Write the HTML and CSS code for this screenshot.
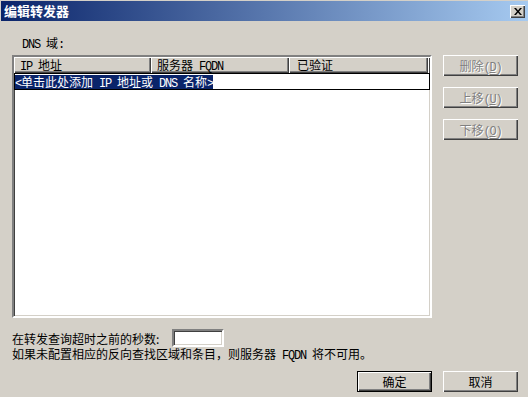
FILE: index.html
```html
<!DOCTYPE html>
<html lang="zh-CN">
<head>
<meta charset="UTF-8">
<title>编辑转发器</title>
<link rel="stylesheet" href="styles.css">
</head>
<body>
    <!-- Title bar -->
    <div class="titlebar">
        <span class="title">编辑转发器</span>
        <button class="close-btn">
            <svg width="8" height="7" viewBox="0 0 8 7">
                <path d="M0 0h2l2 2.5 2-2.5h2l-3 3.5 3 3.5h-2l-2-2.5-2 2.5h-2l3-3.5z" fill="#000"/>
            </svg>
        </button>
    </div>

    <div class="dialog">
        <div class="field-label"><span class="en">DNS </span>域<span class="en">:</span></div>

        <div class="main">
            <!-- Forwarder list -->
            <div class="listview">
                <div class="list-header">
                    <div class="col col-ip"><span class="en">IP </span>地址</div>
                    <div class="col col-fqdn">服务器<span class="en"> FQDN</span></div>
                    <div class="col col-ok">已验证</div>
                    <div class="col col-rest"></div>
                </div>
                <div class="list-row">
                    <span class="selected"><span class="en">&lt;</span>单击此处添加<span class="en"> IP </span>地址或<span class="en"> DNS </span>名称<span class="en">&gt;</span></span>
                </div>
            </div>

            <!-- Side buttons -->
            <div class="side-buttons">
                <button class="button" disabled>删除<span class="en">(<u>D</u>)</span></button>
                <button class="button" disabled>上移<span class="en">(<u>U</u>)</span></button>
                <button class="button" disabled>下移<span class="en">(<u>O</u>)</span></button>
            </div>
        </div>

        <div class="timeout-row">
            <span class="timeout-label">在转发查询超时之前的秒数:</span>
            <input class="timeout-input" type="text">
        </div>
        <div class="note">如果未配置相应的反向查找区域和条目，则服务器<span class="en"> FQDN </span>将不可用。</div>

        <div class="footer">
            <button class="button default-btn">确定</button>
            <button class="button">取消</button>
        </div>
    </div>
</body>
</html>
```

FILE: styles.css
```css
body, html {
    margin: 0;
    padding: 0;
    width: 528px;
    height: 397px;
    overflow: hidden;
    background-color: #d4d0c8;
    font-family: "Noto Sans CJK SC", sans-serif;
    font-size: 12px;
    color: #000;
}

/* Latin parts in a narrow mono face, like the bitmap font */
.en {
    font-family: "Liberation Mono", monospace;
    font-size: 12px;
    letter-spacing: -1.2px;
    white-space: pre;
}

/* Title bar */
.titlebar {
    display: flex;
    align-items: center;
    justify-content: space-between;
    height: 20px;
    margin: 1px 0 0 1px;
    padding: 0 3px 0 3px;
    background: linear-gradient(to right, #0a246a, #a6caf0);
}

.title {
    color: #fff;
    font-weight: bold;
    font-size: 13px;
    line-height: 20px;
}

.close-btn {
    width: 15px;
    height: 13px;
    padding: 0;
    border: none;
    background-color: #d4d0c8;
    box-shadow: inset 1px 1px #fff, inset -1px -1px #404040, inset -2px -2px #808080;
    display: flex;
    align-items: center;
    justify-content: center;
}

/* Dialog body */
.dialog {
    padding: 0 10px 0 12px;
}

.field-label {
    margin-top: 15px;
    margin-left: 10px;
    line-height: 13px;
    height: 13px;
}

.main {
    display: flex;
    gap: 11px;
    margin-top: 6px;
}

.listview {
    width: 416px;
    height: 259px;
    background-color: #fff;
    border: 2px solid;
    border-color: #808080 #fff #fff #808080;
    box-shadow: inset 1px 1px #404040, inset -1px -1px #d4d0c8;
    overflow: hidden;
}

.list-header {
    display: flex;
    height: 16px;
}

.col {
    height: 16px;
    line-height: 16px;
    padding-left: 6px;
    box-sizing: border-box;
    background-color: #d4d0c8;
    box-shadow: inset 1px 1px #fff, inset -1px -1px #404040, inset -2px -2px #808080;
    white-space: nowrap;
}

.col-ip { width: 137px; }
.col-fqdn { width: 138px; }
.col-ok { width: 139px; padding-left: 8px; }
.col-rest { flex: 1; padding: 0; }

.list-row {
    height: 15px;
    border: 1px solid #000;
    display: flex;
    align-items: center;
}

.selected {
    background-color: #0a246a;
    color: #fff;
    line-height: 14px;
    height: 14px;
    white-space: nowrap;
}

/* Buttons */
.side-buttons {
    display: flex;
    flex-direction: column;
    gap: 11px;
}

.button {
    width: 75px;
    height: 21px;
    padding: 0;
    border: none;
    background-color: #d4d0c8;
    font-family: "Noto Sans CJK SC", sans-serif;
    font-size: 12px;
    color: #000;
    box-shadow: inset 1px 1px #fff, inset -1px -1px #404040, inset -2px -2px #808080;
}

.button:disabled {
    color: #808080;
    text-shadow: 1px 1px #fff;
}

.default-btn {
    outline: 1px solid #000;
    outline-offset: -1px;
    box-shadow: inset 2px 2px #fff, inset -2px -2px #404040, inset -3px -3px #808080;
}

/* Bottom area */
.timeout-row {
    display: flex;
    align-items: center;
    gap: 13px;
    margin-top: 11px;
    height: 18px;
}

.timeout-label {
    line-height: 13px;
    height: 13px;
}

.timeout-input {
    width: 52px;
    height: 18px;
    box-sizing: border-box;
    border: 2px solid;
    border-color: #808080 #fff #fff #808080;
    box-shadow: inset 1px 1px #404040, inset -1px -1px #d4d0c8;
    background-color: #fff;
    padding: 0;
    margin: 0;
}

.note {
    line-height: 13px;
    height: 13px;
    white-space: nowrap;
}

.footer {
    display: flex;
    justify-content: flex-end;
    gap: 11px;
    margin-top: 11px;
}
```
